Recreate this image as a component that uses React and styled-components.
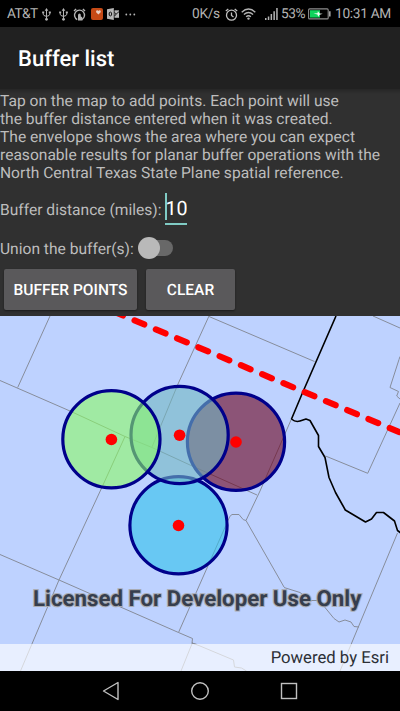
import React, { useState } from "react";
import styled, { createGlobalStyle } from "styled-components";

const GlobalStyle = createGlobalStyle`
  * { box-sizing: border-box; }
  body {
    margin: 0;
    background: #000;
    font-family: Roboto, "Liberation Sans", sans-serif;
    text-rendering: geometricPrecision;
  }
  button, input { font-family: inherit; text-rendering: inherit; }
`;

const Screen = styled.main`
  width: 400px;
  height: 711px;
  display: flex;
  flex-direction: column;
  overflow: hidden;
  background: #303030;
`;

const StatusBar = styled.div`
  height: 27px;
  flex: none;
  display: flex;
  align-items: center;
  padding: 1px 9px 0 7px;
  background: #000;
  color: #b4b4b4;
  svg { display: block; flex: none; }
`;

const StatusText = styled.span`
  width: ${(p) => p.$width}px;
  flex: none;
  font-size: 13.7px;
  line-height: 16px;
  letter-spacing: ${(p) => p.$track || 0}px;
  margin-left: ${(p) => p.$gap || 0}px;
  white-space: nowrap;
`;

const StatusIcon = styled.span`
  display: flex;
  margin-left: ${(p) => p.$gap}px;
`;

const Spacer = styled.div`
  flex: 1;
`;

const AppBar = styled.header`
  height: 62px;
  flex: none;
  display: flex;
  align-items: center;
  padding: 3px 18px 0;
  background: #212121;
`;

const Title = styled.h1`
  margin: 0;
  font-size: 22px;
  font-weight: 500;
  line-height: 28px;
  color: #fff;
`;

const Controls = styled.section`
  height: 227px;
  flex: none;
  display: flex;
  flex-direction: column;
  align-items: flex-start;
  background: linear-gradient(#262626, #303030 5px);
  color: #bdbdbd;
  font-size: 15.58px;
`;

const Instructions = styled.p`
  margin: 0;
  padding-top: 3px;
  line-height: 18.1px;
  white-space: pre;
`;

const FieldRow = styled.div`
  display: flex;
  align-items: center;
  height: ${(p) => p.$height}px;
  margin-top: ${(p) => p.$top}px;
`;

const FieldLabel = styled.label`
  line-height: 20px;
  padding-top: 1px;
  white-space: nowrap;
`;

const DistanceField = styled.div`
  width: 22px;
  height: 32px;
  margin-left: 4px;
  border-bottom: 2px solid #80cbc4;
  display: flex;
`;

const Caret = styled.span`
  width: 2px;
  height: 27px;
  margin-right: -2px;
  background: #80cbc4;
`;

const DistanceInput = styled.input`
  width: 22px;
  height: 29px;
  padding: 1px 0 0;
  border: 0;
  outline: 0;
  background: transparent;
  color: #fff;
  font-size: 19.7px;
`;

const SwitchTrack = styled.button`
  width: 35px;
  height: 22px;
  margin-left: 4px;
  padding: 0;
  border: 0;
  display: flex;
  align-items: center;
  justify-content: ${(p) => (p.$on ? "flex-end" : "flex-start")};
  background: transparent;
  position: relative;
  &::before {
    content: "";
    position: absolute;
    left: 5px;
    top: 3px;
    width: 30px;
    height: 16px;
    border-radius: 8px;
    background: #686868;
  }
`;

const SwitchThumb = styled.span`
  position: relative;
  width: 22px;
  height: 22px;
  border-radius: 50%;
  background: #b9b9b9;
`;

const ButtonRow = styled.div`
  display: flex;
  gap: 9px;
  padding-left: 4px;
  margin-top: 9px;
`;

const ActionButton = styled.button`
  width: ${(p) => p.$width}px;
  height: 41px;
  padding: 1px 0 0;
  border: 0;
  border-radius: 2px;
  background: #5a595b;
  box-shadow: 0 1px 2px rgba(0, 0, 0, 0.45);
  color: #fff;
  font-size: 15.5px;
  font-weight: 500;
  white-space: nowrap;
`;

const MapView = styled.section`
  height: 355px;
  flex: none;
  position: relative;
  background: #bed2ff;
`;

const MapDrawing = styled.svg`
  display: block;
`;

const Watermark = styled.div`
  position: absolute;
  left: 33px;
  top: 268.5px;
  color: #363e4e;
  font-size: 22.25px;
  font-weight: 700;
  line-height: 28px;
  white-space: nowrap;
  -webkit-text-stroke: 2.2px #a9acb4;
  paint-order: stroke fill;
`;

const Attribution = styled.footer`
  position: absolute;
  left: 0;
  right: 0;
  bottom: 0;
  height: 27px;
  padding: 2px 11px 0 0;
  display: flex;
  align-items: center;
  justify-content: flex-end;
  background: rgba(255, 255, 255, 0.65);
  color: #2c2f36;
  font-size: 16.7px;
  white-space: nowrap;
`;

const NavBar = styled.nav`
  height: 40px;
  flex: none;
  display: flex;
  align-items: center;
  justify-content: center;
  gap: 69px;
  background: #000;
  svg { display: block; }
`;

const UsbIcon = () => (
  <svg width="9" height="13" viewBox="0 0 9 13" fill="none" stroke="#b4b4b4">
    <path d="M4.5 1.5v9M1.2 4v2.2q0 1.6 3.3 2.2M7.8 4v2.2q0 1.6-3.3 2.2" />
    <path d="M4.5 0 6.3 2.8H2.7zM0.2 3.4h2v1.8h-2zM6.8 3.4h2v1.8h-2z" fill="#b4b4b4" stroke="none" />
    <circle cx="4.5" cy="11.3" r="1.4" fill="#b4b4b4" stroke="none" />
  </svg>
);

const AlarmIcon = () => (
  <svg width="13" height="13" viewBox="0 0 13 13" fill="none" stroke="#c0c0c0" strokeWidth="1.3">
    <circle cx="6.5" cy="7.2" r="5" />
    <path d="M6.5 4.4v3l2 1.5M.8 3 3.3 1M12.2 3 9.7 1" />
  </svg>
);

const TouchAlarmIcon = () => (
  <svg width="13" height="13" viewBox="0 0 13 13" fill="none" stroke="#b4b4b4" strokeWidth="1.4">
    <path d="M4.2 11.6A5 5 0 1 1 9 11.500M1 3 3.1 1M12 3 9.9 1" />
    <path d="M5 12.500V7.500q0-2 1.500-2 1.300 0 1.300 1.600v1.400q1.700.2 1.700 2v2z" fill="#b4b4b4" stroke="none" />
  </svg>
);

const HeartAppIcon = () => (
  <svg width="12" height="12" viewBox="0 0 12 12">
    <rect width="12" height="12" rx="2" fill="#c64a16" />
    <path d="M7.400 6.500 5.100 4.200Q4.700 2.400 6.200 2.300q.9 0 1.200.8.3-.8 1.300-.8 1.500.2 1 1.900z" fill="#ead0c4" />
  </svg>
);

const OutlookIcon = () => (
  <svg width="12" height="12" viewBox="0 0 12 12">
    <path d="M0 1.2 6.8 0v12L0 10.8z" fill="#b8b8b8" />
    <path d="M7.5 2.3H12v7.5H7.5z" fill="#b8b8b8" />
    <path d="M7.5 4.3 9.2 6 12 3.7M7.7 8l1.5-2" fill="none" stroke="#111" strokeWidth=".9" />
    <ellipse cx="3.4" cy="6" rx="1.3" ry="1.9" fill="none" stroke="#111" strokeWidth="1" />
  </svg>
);

const MoreIcon = () => (
  <svg width="11" height="3" viewBox="0 0 11 3" fill="#b4b4b4">
    <circle cx="1.3" cy="1.5" r=".9" />
    <circle cx="5.3" cy="1.5" r=".9" />
    <circle cx="9.3" cy="1.5" r=".9" />
  </svg>
);

const WifiIcon = () => (
  <svg width="15" height="12" viewBox="0 0 15 12" fill="none" stroke="#b4b4b4" strokeWidth="1.3">
    <path d="M.7 4.2Q7.5-2.3 14.3 4.2M2.9 6.5q4.6-4 9.2 0M5.1 8.7q2.4-1.9 4.8 0" />
    <circle cx="7.5" cy="10.6" r="1.2" fill="#b4b4b4" stroke="none" />
  </svg>
);

const SignalIcon = () => (
  <svg width="13" height="12" viewBox="0 0 13 12" fill="#b4b4b4">
    <path d="M0 10h1.5v2H0zM2.8 8.4h1.5V12H2.8zM5.6 6h1.5v6H5.6zM8.4 3.2h1.5V12H8.4zM11.2 0h1.5v12h-1.5z" />
  </svg>
);

const BatteryIcon = () => (
  <svg width="23" height="12" viewBox="0 0 23 12">
    <rect x=".6" y=".9" width="19.6" height="10" rx="1" fill="none" stroke="#8d8d8d" strokeWidth="1.1" />
    <path d="M21 3.2h1.6v5.4H21z" fill="#a5a5a5" />
    <path d="M2 2.2h10v7.4H2z" fill="#0fd45c" />
    <path d="m5.5 5.5 4-.3.4-2 1.8 2.2 3.1.3-3.3 1-1.3 2-.7-2.2z" fill="#f1fff5" />
  </svg>
);

const BUFFERS = [
  { cx: 178.5, cy: 525.3, fill: "rgb(47,193,235)" },
  { cx: 236, cy: 441.8, fill: "rgb(107,0,28)" },
  { cx: 179.6, cy: 435, fill: "rgb(114,184,194)" },
  { cx: 111.4, cy: 439.3, fill: "rgb(140,250,102)" },
];

const MapCanvas = () => (
  <MapDrawing width="400" height="355" viewBox="0 316 400 355" fill="none">
    <g stroke="#878d9b" strokeWidth="1">
      <path d="M50 316 17.7 387.5M0 380.5 70 411 125 436.5 152 447.5 190 465 257 495M125 436.5 103 485 59 580 20.5 671" />
      <path d="M209 316 178 384 152 447" />
      <path d="M209 316.5 314.5 361.5M373 316l27 12" />
      <path d="M291 420 260 491 246 520.5" />
      <path d="M246 520.5l38 66.5M246 520.5q-3 0-5-3.5l-2-2.5h-7q-2.5 1-4 6L178.5 632.5" />
      <path d="M284 587.5l16 5 10 8h8l7 7 9 11 5 3.5 6-2 6 2 3 4.5 5 .5M397.5 533 340 671" />
      <path d="M0 554.5l59 25.5 119.500 52.500 14 6-.5 4.500 5 1.500M192.500 642.500 181 671M192 643l8 3 33.500 14 1 7 7 1 5 3" />
      <path d="M325.5 456 367.7 473.3 400 403M400 356.5l-1 3-9 28 8.5 4-1.8 4.5 3.3 3" />
    </g>
    <path
      d="M336 316 302 394 291.5 419q4 3.5 8.5 2l6-2 4 1.5 8.5 15v11l6.5 11 4 20 6.5 15L345.3 510l20.2 12 6-3 5-6.5h7l11 8.5 3 9.5 4 3"
      stroke="#000"
      strokeWidth="1.6"
      strokeLinejoin="round"
    />
    {BUFFERS.map((b) => (
      <g key={b.cx}>
        <circle cx={b.cx} cy={b.cy} r="48.6" fill={b.fill} fillOpacity=".6" />
        <circle cx={b.cx} cy={b.cy} r="48.6" stroke="#00008b" strokeWidth="3.2" />
      </g>
    ))}
    <path
      d="M113.3 311.4 411 437"
      stroke="#f00"
      strokeWidth="6.2"
      strokeLinecap="round"
      strokeDasharray="10.5 12.58"
    />
    {BUFFERS.map((b) => (
      <circle key={b.cx} cx={b.cx} cy={b.cy + 0.2} r="5.8" fill="#f00" />
    ))}
  </MapDrawing>
);

const INSTRUCTIONS = [
  "Tap on the map to add points. Each point will use",
  "the buffer distance entered when it was created.",
  "The envelope shows the area where you can expect",
  "reasonable results for planar buffer operations with the",
  "North Central Texas State Plane spatial reference.",
].join("\n");

export default function App() {
  const [union, setUnion] = useState(false);
  return (
    <Screen>
      <GlobalStyle />
      <StatusBar>
        <StatusText $width={30} $track={-0.6}>AT&amp;T</StatusText>
        <StatusIcon $gap={5}><UsbIcon /></StatusIcon>
        <StatusIcon $gap={8}><UsbIcon /></StatusIcon>
        <StatusIcon $gap={5}><TouchAlarmIcon /></StatusIcon>
        <StatusIcon $gap={4.5}><HeartAppIcon /></StatusIcon>
        <StatusIcon $gap={4.5}><OutlookIcon /></StatusIcon>
        <StatusIcon $gap={6}><MoreIcon /></StatusIcon>
        <Spacer />
        <StatusText $width={29} $track={-0.3}>0K/s</StatusText>
        <StatusIcon $gap={4}><AlarmIcon /></StatusIcon>
        <StatusIcon $gap={3}><WifiIcon /></StatusIcon>
        <StatusIcon $gap={9}><SignalIcon /></StatusIcon>
        <StatusText $width={24} $gap={3} $track={-0.5}>53%</StatusText>
        <StatusIcon $gap={3}><BatteryIcon /></StatusIcon>
        <StatusText $width={56} $gap={4} $track={-0.3}>10:31 AM</StatusText>
      </StatusBar>
      <AppBar>
        <Title>Buffer list</Title>
      </AppBar>
      <Controls>
        <Instructions>{INSTRUCTIONS}</Instructions>
        <FieldRow $height={34} $top={10}>
          <FieldLabel htmlFor="distance">Buffer distance (miles):</FieldLabel>
          <DistanceField>
            <Caret />
            <DistanceInput id="distance" defaultValue="10" />
          </DistanceField>
        </FieldRow>
        <FieldRow $height={24} $top={10}>
          <FieldLabel>Union the buffer(s):</FieldLabel>
          <SwitchTrack $on={union} onClick={() => setUnion(!union)} aria-label="Union the buffers">
            <SwitchThumb />
          </SwitchTrack>
        </FieldRow>
        <ButtonRow>
          <ActionButton $width={133}>BUFFER POINTS</ActionButton>
          <ActionButton $width={89}>CLEAR</ActionButton>
        </ButtonRow>
      </Controls>
      <MapView>
        <MapCanvas />
        <Watermark>Licensed For Developer Use Only</Watermark>
        <Attribution>Powered by Esri</Attribution>
      </MapView>
      <NavBar>
        <svg width="20" height="20" viewBox="0 0 20 20" fill="none" stroke="#c0c0c0" strokeWidth="1.4" strokeLinejoin="round">
          <path d="M17 1.5v17L2.5 10z" />
        </svg>
        <svg width="20" height="20" viewBox="0 0 20 20" fill="none" stroke="#c0c0c0" strokeWidth="1.4">
          <circle cx="10" cy="10" r="8.3" />
        </svg>
        <svg width="20" height="20" viewBox="0 0 20 20" fill="none" stroke="#c0c0c0" strokeWidth="1.4">
          <rect x="2.5" y="2.5" width="15" height="15" />
        </svg>
      </NavBar>
    </Screen>
  );
}
